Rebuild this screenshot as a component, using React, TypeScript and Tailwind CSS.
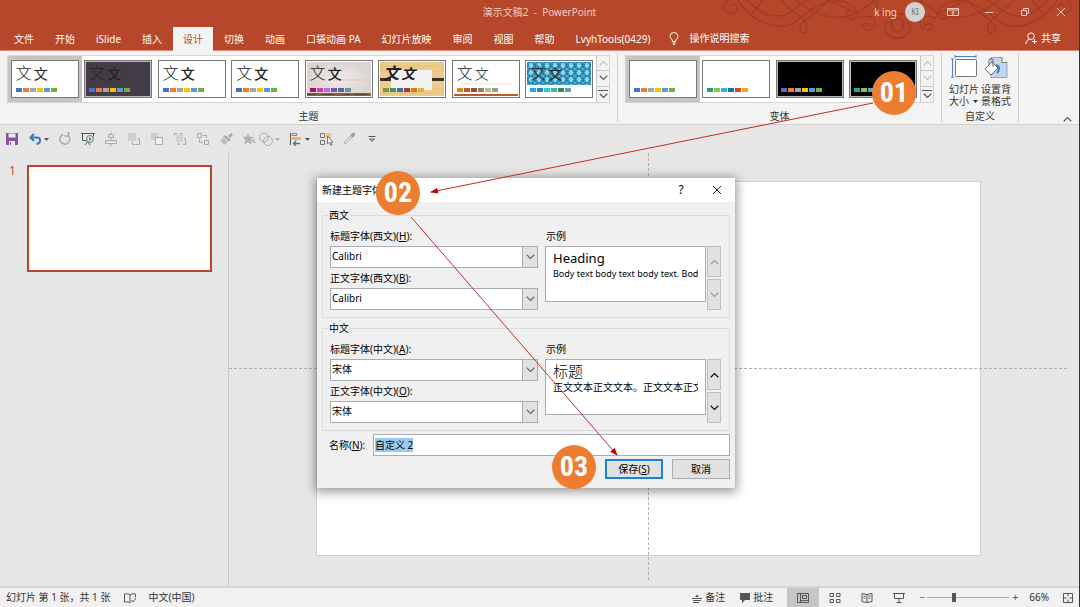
import { useState } from "react"
import type { ReactNode } from "react"
import clsx from "clsx"

const OFFICE = ["bg-[#4472c4]", "bg-[#ed7d31]", "bg-[#a5a5a5]", "bg-[#ffc000]", "bg-[#5b9bd5]", "bg-[#70ad47]"]

const TABS = ["文件", "开始", "iSlide", "插入", "设计", "切换", "动画", "口袋动画 PA", "幻灯片放映", "审阅", "视图", "帮助", "LvyhTools(0429)"]

type Art = "dark" | "wall" | "wood" | "retro" | "pattern"

const THEMES: { name: string; colors: string[]; art?: Art; first?: string; second?: string }[] = [
  { name: "Office", colors: OFFICE },
  { name: "深色", colors: OFFICE, art: "dark", second: "font-medium" },
  { name: "白色", colors: OFFICE, second: "font-medium" },
  { name: "简约", colors: OFFICE, second: "font-medium" },
  { name: "画廊", colors: ["bg-[#b31166]", "bg-[#e33d9b]", "bg-[#b86bf0]", "bg-[#7a55b0]", "bg-[#5a64a8]", "bg-[#6a92a4]"], art: "wall", second: "font-medium" },
  { name: "木纹", colors: ["bg-[#83992a]", "bg-[#3c9770]", "bg-[#44709d]", "bg-[#a23c33]", "bg-[#d97828]", "bg-[#deb340]"], art: "wood", first: "font-bold italic", second: "font-bold italic" },
  { name: "回顾", colors: ["bg-[#e48312]", "bg-[#bd582c]", "bg-[#865640]", "bg-[#9b8357]", "bg-[#c2bc80]", "bg-[#94a088]"], art: "retro", second: "font-light" },
  { name: "积分", colors: ["bg-[#1cade4]", "bg-[#2683c6]", "bg-[#27ced7]", "bg-[#42ba97]", "bg-[#3e8853]", "bg-[#62a39f]"], art: "pattern" },
]

const VARIANTS = [
  { name: "变体 1", colors: OFFICE, dark: false },
  { name: "变体 2", colors: ["bg-[#2c9c7c]", "bg-[#8cc63f]", "bg-[#31b6d4]", "bg-[#1f6fb0]", "bg-[#c0501f]", "bg-[#f0a01e]"], dark: false },
  { name: "变体 3", colors: OFFICE, dark: true },
  { name: "变体 4", colors: ["bg-[#2ba88c]", "bg-[#92be4b]", "bg-[#31b6d4]", "bg-[#1f6fb0]", "bg-[#c0501f]", "bg-[#f0a01e]"], dark: true },
]

function Chevron({ up = false, className = "" }: { up?: boolean; className?: string }) {
  return (
    <svg viewBox="0 0 12 8" className={clsx("h-1.5 w-[9px]", className)} fill="none" stroke="currentColor" strokeWidth="1.5">
      <path d={up ? "M1 7l5-5 5 5" : "M1 1l5 5 5-5"} />
    </svg>
  )
}

function Caret() {
  return (
    <svg viewBox="0 0 5 3" className="h-[3px] w-[5px] shrink-0" fill="currentColor">
      <path d="M0 0h5L2.500 3z" />
    </svg>
  )
}

function Ornament() {
  const half = (
    <>
      <path d="M20-2C12-3 5 1 5 7s8 9 12 4-2-9-6-5" />
      <path d="M18-1c9 14 22 25 40 27 16 2 22-8 32-15s22-13 36-9c12 4 16 15 8 17s-8-9-2-9" />
      <path d="M28-1c8 10 18 17 30 17 18 0 22-17 38-18 18 0 30 12 44 16" />
      <path d="M62-1c8 14 27 19 26 28 0 8-7 7-7 1 0-8 20-14 29-30" />
      <path d="M44-1c-2 8-9 9-12 16M76-1c10 10 28 20 48 18 18-2 22-12 36-19" />
      <path d="M152 27c-3-5-10-4-9 0s12 4 13-3-8-10-16-6" />
      <path d="M179 38c-9 0-14-6-13-12s10-4 7 1M179 32c-8 0-10-12 0-14M160-1c-6 12 2 18 19 14" />
    </>
  )
  return (
    <svg viewBox="0 0 360 50" className="pointer-events-none absolute top-0 right-0 h-[50px] w-[360px]" fill="none" stroke="#9d3d24" strokeWidth="1.3">
      <g>{half}</g>
      <g transform="translate(357 0) scale(-1 1)">{half}</g>
    </svg>
  )
}

function TitleBar() {
  return (
    <div className="relative grid h-6 grid-cols-[1fr_auto_1fr] items-center text-[#f6cfc3]">
      <span />
      <h1 className="whitespace-pre text-[10px]">演示文稿2  -  PowerPoint</h1>
      <div className="flex items-center justify-end">
        <span className="mr-2 text-[10px]">k ing</span>
        <span className="mr-2.5 flex size-5 items-center justify-center rounded-full bg-[#d2d2d2] text-[8px] text-[#777]">KI</span>
        <button aria-label="功能区显示选项" className="flex w-9 justify-center">
          <svg viewBox="0 0 12 10" className="h-2.5 w-3" fill="none" stroke="currentColor">
            <path d="M.5 1.500h11v7H.5zM.5 3h11M6 8V4.500M4.500 6L6 4.500 7.500 6" />
          </svg>
        </button>
        <button aria-label="最小化" className="flex w-9 justify-center">
          <span className="h-px w-2 bg-current" />
        </button>
        <button aria-label="还原" className="flex w-9 justify-center">
          <svg viewBox="0 0 10 10" className="size-2.5" fill="none" stroke="currentColor">
            <path d="M1.500 3.500h5v5h-5zM3.500 3.500v-2h5v5h-2" />
          </svg>
        </button>
        <button aria-label="关闭" className="flex w-9 justify-center">
          <svg viewBox="0 0 10 10" className="size-2.5" fill="none" stroke="currentColor">
            <path d="M1 1l8 8M9 1L1 9" />
          </svg>
        </button>
      </div>
    </div>
  )
}

function TabBar({ active, onSelect }: { active: string; onSelect: (tab: string) => void }) {
  return (
    <nav className="relative flex h-[27px] items-end gap-px border-b border-[#d98a77] pl-1 text-[10px] text-white">
      {TABS.map((tab) => (
        <button
          key={tab}
          onClick={() => onSelect(tab)}
          className={clsx("-mb-px h-6 px-2.5 whitespace-nowrap", tab === active && "bg-[#f3f3f3] text-[#b7472a]")}
        >
          {tab}
        </button>
      ))}
      <label className="ml-2 flex h-6 items-center gap-2.5">
        <svg viewBox="0 0 10 13" className="h-[13px] w-2.5" fill="none" stroke="currentColor">
          <path d="M3.500 9.500C3.500 7 1 6.500 1 4.500a4 4 0 018 0c0 2-2.500 2.500-2.500 5zM3.500 11h3M4 12.500h2" />
        </svg>
        <input placeholder="操作说明搜索" aria-label="操作说明搜索" className="w-20 bg-transparent outline-none placeholder:text-white" />
      </label>
      <button className="mr-[18px] ml-auto flex h-6 items-center gap-1">
        <svg viewBox="0 0 12 12" className="size-3" fill="none" stroke="currentColor">
          <path d="M6 7.500a3.300 3.300 0 100-6.600 3.300 3.300 0 000 6.600zM.8 12c.2-2.500 1.500-4.200 3.700-4.800M9.500 7v5M7 9.500h5" />
        </svg>
        共享
      </button>
    </nav>
  )
}

function Swatches({ colors }: { colors: string[] }) {
  return (
    <span className="flex gap-px">
      {colors.map((color, i) => (
        <span key={i} className={clsx("h-1 w-1.5", color)} />
      ))}
    </span>
  )
}

function ThemeArt({ art }: { art?: Art }) {
  return (
    <svg viewBox="0 0 64 34" preserveAspectRatio="none" className="absolute inset-0 size-full">
      {art === "dark" && <path d="M0 0h64v34H0z" fill="#433c47" />}
      {art === "wall" && (
        <>
          <radialGradient id="wall">
            <stop offset="0" stopColor="#f1ecec" />
            <stop offset="1" stopColor="#dcd4d3" />
          </radialGradient>
          <path d="M0 0h64v34H0z" fill="url(#wall)" />
          <path d="M26 18h32" stroke="#d9a9b4" strokeWidth=".6" />
          <path d="M0 31h64v3H0z" fill="#84653f" />
          <path d="M0 32.500h9m6 0h12m9 0h7m4 0h13" stroke="#5d4328" />
        </>
      )}
      {art === "wood" && (
        <>
          <path d="M0 0h64v34H0z" fill="#eccb8c" />
          <path d="M0 4h64M0 9h64M0 27h64M0 31h64" stroke="#e5c07c" />
          <path d="M0 17.500h64" stroke="#37312c" strokeWidth="3" />
          <path d="M11 8h41v20H11z" fill="#f2f2f0" />
        </>
      )}
      {art === "retro" && (
        <>
          <path d="M7 22h50" stroke="#ddd" strokeWidth=".7" />
          <path d="M0 32h64v2H0z" fill="#bd582c" />
        </>
      )}
      {art === "pattern" && (
        <>
          <pattern id="diamonds" width="8" height="7" patternUnits="userSpaceOnUse">
            <path d="M0 0h8v7H0z" fill="#1b86b4" />
            <path d="M4 .5l2.500 3-2.500 3-2.500-3z" fill="#b9e2ef" />
            <path d="M0 0l8 7M8 0L0 7" stroke="#70bcd6" strokeWidth=".8" />
          </pattern>
          <path d="M0 0h64v23H0z" fill="url(#diamonds)" />
        </>
      )}
    </svg>
  )
}

function GalleryItem({ name, selected, dark = false, children }: { name: string; selected: boolean; dark?: boolean; children: ReactNode }) {
  return (
    <button aria-label={name} className={clsx("flex items-center justify-center", selected && "bg-[#c5c5c5]")}>
      <span className={clsx("flex h-[38px] w-[68px] border border-[#777] p-px", dark ? "bg-[#bbb]" : "bg-white")}>
        <span className={clsx("relative flex grow flex-col justify-end overflow-hidden pb-1 pl-[3px]", dark && "bg-black")}>{children}</span>
      </span>
    </button>
  )
}

function GalleryScroll({ atTop = true, canScroll }: { atTop?: boolean; canScroll: boolean }) {
  return (
    <div className="grid w-[13px] grid-rows-3 divide-y divide-[#c6c6c6] border-l border-[#c6c6c6] bg-[#f3f3f3] text-[#555]">
      <button aria-label="上一行" className={clsx("flex items-center justify-center", atTop && "text-[#c0c0c0]")}>
        <Chevron up />
      </button>
      <button aria-label="下一行" className={clsx("flex items-center justify-center", !canScroll && "text-[#c0c0c0]")}>
        <Chevron />
      </button>
      <button aria-label="其他" className="flex flex-col items-center justify-center gap-0.5">
        <span className="h-px w-2.5 bg-current" />
        <Chevron />
      </button>
    </div>
  )
}

function RibbonGroup({ label, children }: { label: string; children: ReactNode }) {
  return (
    <section className="my-0.5 flex flex-col border-r border-[#cfcfcf] px-[7px] pt-0.5">
      {children}
      <h2 className="mt-auto text-center text-[10px] leading-3">{label}</h2>
    </section>
  )
}

function Ribbon() {
  return (
    <div className="flex h-[74px] border-b border-[#d0d0d0] bg-[#f3f3f3] text-[#333]">
      <RibbonGroup label="主题">
        <div className="flex h-12 border border-[#d5d5d5] bg-white">
          <div className="grid w-[588px] grid-cols-8">
            {THEMES.map((theme, i) => (
              <GalleryItem key={theme.name} name={theme.name} selected={i === 0} dark={theme.art === "dark"}>
                <ThemeArt art={theme.art} />
                <span className="relative mb-[7px] flex items-end gap-0.5 leading-4 text-[#222]">
                  <span className={clsx("text-base leading-4", theme.first ?? "font-light")}>文</span>
                  <span className={clsx("text-sm leading-[14px]", theme.second)}>文</span>
                </span>
                <span className="relative">
                  <Swatches colors={theme.colors} />
                </span>
              </GalleryItem>
            ))}
          </div>
          <GalleryScroll canScroll />
        </div>
      </RibbonGroup>
      <RibbonGroup label="变体">
        <div className="flex h-12 border border-[#d5d5d5] bg-white">
          <div className="grid w-[294px] grid-cols-4">
            {VARIANTS.map((variant, i) => (
              <GalleryItem key={variant.name} name={variant.name} selected={i === 0} dark={variant.dark}>
                <Swatches colors={variant.colors} />
              </GalleryItem>
            ))}
          </div>
          <GalleryScroll canScroll={false} />
        </div>
      </RibbonGroup>
      <RibbonGroup label="自定义">
        <div className="flex gap-0.5 text-[10px] leading-3">
          <button className="flex flex-col items-center gap-1">
            <svg viewBox="0 0 26 24" className="h-6 w-[26px]" fill="none">
              <path d="M4 1.500h21M4 0v3M25 0v3M1.500 4v18M0 4h3M0 22h3" stroke="#4a86c5" />
              <rect x="4.500" y="4.500" width="21" height="17" rx="1" fill="#fff" stroke="#777" />
            </svg>
            <span>
              幻灯片
              <span className="flex items-center gap-1">大小 <Caret /></span>
            </span>
          </button>
          <button className="flex flex-col items-center gap-1">
            <svg viewBox="0 0 26 24" className="h-6 w-[26px]" fill="none">
              <path d="M8 2.500h11l5 5v15H8z" fill="#c3d6ec" stroke="#8aa9cc" />
              <path d="M19 2.500v5h5" fill="#fff" stroke="#777" />
              <path d="M2 14l7-7 6 6-7 7z" fill="#fff" stroke="#666" />
              <path d="M6 10V5.500a2 2 0 014 0V12" stroke="#666" />
              <path d="M13 10c4 1 4 5 1 8" stroke="#3f7fc1" strokeWidth="2" />
            </svg>
            <span className="w-[30px]">设置背景格式</span>
          </button>
        </div>
      </RibbonGroup>
      <button aria-label="折叠功能区" className="mt-auto mr-[7px] mb-0.5 ml-auto text-[#555]">
        <Chevron up />
      </button>
    </div>
  )
}

function Tool({ label, menu = false, className = "text-[#a9a9a9]", children }: { label: string; menu?: boolean; className?: string; children: ReactNode }) {
  return (
    <button aria-label={label} className={clsx("flex items-center gap-0.5", className)}>
      <svg viewBox="0 0 14 14" className="size-3.5" fill="none" stroke="currentColor">
        {children}
      </svg>
      {menu && <Caret />}
    </button>
  )
}

function QuickAccess() {
  return (
    <div className="flex h-7 items-center gap-[3px] pl-[5px]">
      <div className="flex gap-[9px]">
        <Tool label="保存" className="text-[#8a4fa8]">
          <path d="M1.500 1.500h11v11h-11z" fill="#8a4fa8" />
          <path d="M3.500 1.500h7v4h-7zM4 9h6v4H4z" fill="#f3eef6" stroke="none" />
          <path d="M5.500 10v3" />
        </Tool>
        <Tool label="撤消" menu className="text-[#555]">
          <path d="M6 2L2.500 5.500 6 9M3 5.500h6c4 0 4.500 6-.5 6.500" stroke="#3f78b5" strokeWidth="2" />
        </Tool>
        <Tool label="恢复">
          <path d="M5 2.500a5 5 0 105 .8M10.500 0v4h-4" strokeWidth="1.500" />
        </Tool>
        <Tool label="从头开始" className="text-[#555]">
          <path d="M0 1.500h14M1.500 1.500v7h5M12.500 1.500v3M7 9l-3 4M7 10l2 3" />
          <circle cx="9" cy="7" r="3.500" fill="#e6e6e6" stroke="#5d8a76" />
          <path d="M8 5l3 2-3 2z" fill="#3f9b73" stroke="none" />
        </Tool>
        <Tool label="水平居中">
          <path d="M7 0v2M7 6v2M7 12v2M4.500 2.500h5v3h-5zM1.500 8.500h11v3h-11z" />
        </Tool>
        <Tool label="上移一层">
          <path d="M8.500 12.500h4v-6h-2M5.500 10v2.500h3" />
          <path d="M1 1h8v8H1z" fill="#d0cdd0" stroke="none" />
        </Tool>
        <Tool label="下移一层">
          <path d="M1 1h7v7H1z" fill="#d0cdd0" stroke="none" />
          <path d="M5.500 5.500h7v7h-7z" fill="#f3f0f3" />
        </Tool>
        <Tool label="组合">
          <path d="M1.500 4V1.500H4M6.500 1.500h2V4M7 12.500H5.500V11M11 6.500h1.500v6H10" />
          <path d="M3 3h7v7H3z" fill="#d4d1d4" stroke="none" />
        </Tool>
        <Tool label="取消组合">
          <path d="M1.500 1.500h4v4h-4zM8.500 8.500h4v4h-4zM7 3.500h3.500V6M3.500 7v3.500H7" />
        </Tool>
        <Tool label="格式刷">
          <path d="M9 4l3-3 2 2-3 3z" fill="currentColor" stroke="none" />
          <path d="M6 3l6 5-2 1.500-6-5z" fill="currentColor" stroke="none" />
          <path d="M4 5.500l5 4L5.500 13 1 8.500c1.500 0 2.500-1 3-3z" fill="#bfbcbf" stroke="none" />
        </Tool>
        <Tool label="动画刷">
          <path d="M6 1l1.500 3.500L12 5 8.500 8l1 5L6 10l-4 2.500L3.500 8 .5 5l4-.5z" fill="#b3b0b3" stroke="none" />
          <path d="M9 8l5 3M10 11l3-4" />
        </Tool>
      </div>
      <div className="flex gap-[9px]">
        <Tool label="合并形状" menu>
          <circle cx="5" cy="5.500" r="4.500" />
          <circle cx="9" cy="9" r="4.500" />
        </Tool>
        <Tool label="左对齐" menu className="text-[#555]">
          <path d="M1.500 1v12" />
          <path d="M3 1.500h5v2H3z" stroke="#888" />
          <path d="M3 5h9v3H3z" fill="#edb45c" stroke="none" />
          <path d="M11 11.500H5M7 9l-2.500 2.500L7 14" stroke="#3f78b5" strokeWidth="1.300" />
        </Tool>
        <Tool label="选择" className="text-[#777]">
          <path d="M1.500 1.500h4v4h-4zM1.500 8.500h4v4h-4z" />
          <path d="M7 1h5v5H7z" fill="#edc178" stroke="none" />
          <path d="M8.500 4v8l2-2 1.500 3.500L13 13l-1-3h2z" fill="#fff" />
        </Tool>
        <Tool label="取色器">
          <path d="M2 12l.5-2L8 4.500 9.500 6 4 11.500z" />
          <path d="M8 3l3 3 2.500-3.500L11.500.5z" fill="#999" stroke="none" />
        </Tool>
        <Tool label="自定义快速访问工具栏" className="text-[#555]">
          <path d="M3.500 4.500h7M4.500 7L7 9.500 9.500 7z" />
        </Tool>
      </div>
    </div>
  )
}

function Workspace() {
  return (
    <main className="flex min-h-0 grow">
      <aside className="flex w-[229px] shrink-0 items-start gap-3 border-r border-[#c9c9c9] pt-3 pr-4 pl-[9px]">
        <span className="w-1.5 text-xs leading-3 text-[#c8502f]">1</span>
        <button aria-label="幻灯片 1" className="h-[107px] grow border-2 border-[#b7472a] bg-white" />
      </aside>
      <div className="relative mr-3 flex grow items-center justify-center pb-0.5">
        <div className="aspect-video w-[665px] border border-[#cfcfcf] bg-white" />
        {/* drawing guides cross at the slide centre */}
        <div className="absolute inset-x-0 top-1/2 -mt-0.5 border-t border-dashed border-[#b0b0b0]" />
        <div className="absolute top-0 bottom-1.5 left-1/2 border-l border-dashed border-[#b0b0b0]" />
      </div>
    </main>
  )
}

function StatusIcon({ label, active = false, children }: { label: string; active?: boolean; children: ReactNode }) {
  return (
    <button aria-label={label} className={clsx("flex h-full w-8 items-center justify-center", active && "bg-[#c6c6c6]")}>
      <svg viewBox="0 0 12 12" className="size-3" fill="none" stroke="#555">
        {children}
      </svg>
    </button>
  )
}

function StatusBar() {
  return (
    <footer className="flex h-[21px] shrink-0 items-center border-t-2 border-[#d6d6d6] bg-[#f1f1f1] px-1.5 text-[10px] text-[#333]">
      <span>幻灯片 第 1 张，共 1 张</span>
      <svg viewBox="0 0 12 12" className="mr-3 ml-3.5 size-3" fill="none" stroke="#555">
        <path d="M6 3C5 2 3 1.500.5 2v8c2.500-.5 4.500 0 5.500 1V3c1-1 3-1.500 5.500-1v3M7.500 8l1.500 2 3-4" />
      </svg>
      <span>中文(中国)</span>
      <div className="ml-auto flex h-full items-center">
        <button className="mr-3.5 flex items-center gap-[3px]">
          <svg viewBox="0 0 10 10" className="size-2.5" fill="#555" stroke="#555">
            <path d="M3 4l2-2.500L7 4z" stroke="none" />
            <path d="M0 5.500h10M1 7.500h8M1 9.500h6" />
          </svg>
          备注
        </button>
        <button className="mr-3.5 flex items-center gap-0.5">
          <svg viewBox="0 0 12 10" className="h-2.5 w-3" fill="#555">
            <path d="M1 0h10v7H6l-3 3V7H1z" />
          </svg>
          批注
        </button>
        <StatusIcon label="普通视图" active>
          <path d="M.5 1.500h11v9H.5zM3.500 1.500v9M5.500 3.500h4v3h-4zM4 8.500h7" />
        </StatusIcon>
        <StatusIcon label="幻灯片浏览">
          <path d="M1 1.500h3.500v3H1zM7.500 1.500H11v3H7.500zM1 7.500h3.500v3H1zM7.500 7.500H11v3H7.500z" />
        </StatusIcon>
        <StatusIcon label="阅读视图">
          <path d="M6 2.500L1 1.500v8l5 1 5-1v-8zM6 2v8.500M2.500 4l2 .3M2.500 6l2 .3M7.500 4.300l2-.3M7.500 6.300l2-.3" />
        </StatusIcon>
        <StatusIcon label="幻灯片放映">
          <path d="M0 1.500h12M1.500 1.500v5h9v-5M6 6.500v4M3.500 10.500h5" />
        </StatusIcon>
        <button aria-label="缩小" className="ml-0.5 w-2.5 text-[#555]">−</button>
        <input
          type="range"
          aria-label="缩放"
          min={10}
          max={200}
          defaultValue={70}
          className="h-px w-[82px] appearance-none bg-[#aaa] [&::-webkit-slider-thumb]:h-[9px] [&::-webkit-slider-thumb]:w-1 [&::-webkit-slider-thumb]:appearance-none [&::-webkit-slider-thumb]:bg-[#555]"
        />
        <button aria-label="放大" className="w-3 text-[#555]">+</button>
        <button className="mr-3.5 ml-2">66%</button>
        <button aria-label="按窗口大小调整">
          <svg viewBox="0 0 10 10" className="size-2.5" fill="none" stroke="#555">
            <path d="M.5.5h9v9h-9zM5 0v3.500M5 6.500V10M0 5h3.500M6.500 5H10" />
          </svg>
        </button>
      </div>
    </footer>
  )
}

function FontSelect({ id, label, hotkey, value }: { id: string; label: string; hotkey: string; value: string }) {
  return (
    <>
      <label htmlFor={id} className="leading-[14px]">
        {label}(<u>{hotkey}</u>):
      </label>
      <div className="relative h-[22px]">
        <select id={id} defaultValue={value} className="size-full appearance-none border border-[#abadb3] bg-white px-px pb-0.5 outline-none">
          <option>{value}</option>
        </select>
        <span className="pointer-events-none absolute inset-y-0 right-0 flex w-4 items-center justify-center border border-[#adadad] bg-[#e1e1e1] text-[#666]">
          <Chevron />
        </span>
      </div>
    </>
  )
}

function FontGroup({ legend, children, preview, canScroll }: { legend: string; children: ReactNode; preview: ReactNode; canScroll: boolean }) {
  const scroll = clsx("flex grow items-center justify-center border border-[#bfbfbf] bg-[#e1e1e1]", canScroll ? "text-black" : "text-[#999]")
  return (
    <fieldset className="min-w-0 border border-[#dcdcdc] pr-2 pb-[7px] pl-[7px]">
      <legend className="-ml-0.5 px-px leading-[14px]">{legend}</legend>
      <div className="flex gap-[7px] pt-[7px]">
        <div className="flex w-[208px] shrink-0 flex-col gap-[3px]">{children}</div>
        <div className="flex min-w-0 grow flex-col gap-[3px]">
          <span className="pl-px leading-[14px]">示例</span>
          <div className="flex grow gap-px">
            <div className="mb-2 min-w-0 grow border border-[#abadb3] bg-white px-[7px] pt-px">
              <div className="overflow-hidden whitespace-nowrap">{preview}</div>
            </div>
            <div className="flex w-3.5 shrink-0 flex-col gap-0.5">
              <button type="button" aria-label="向上滚动" className={scroll}>
                <Chevron up />
              </button>
              <button type="button" aria-label="向下滚动" className={scroll}>
                <Chevron />
              </button>
            </div>
          </div>
        </div>
      </div>
    </fieldset>
  )
}

function FontDialog() {
  const [name, setName] = useState("自定义 2")
  return (
    <form
      role="dialog"
      aria-label="新建主题字体"
      onSubmit={(e) => e.preventDefault()}
      className="absolute top-[178px] left-[317px] w-[418px] bg-[#f0f0f0] text-[10px] text-black shadow-[0_2px_10px_2px_rgba(0,0,0,0.4)]"
    >
      <header className="flex h-6 items-center bg-white pl-[5px]">
        <h2 className="grow">新建主题字体</h2>
        <button type="button" aria-label="帮助" className="w-9 text-xs">?</button>
        <button type="button" aria-label="关闭" className="flex w-9 justify-center">
          <svg viewBox="0 0 10 10" className="size-2.5" fill="none" stroke="#222">
            <path d="M1 1l8 8M9 1L1 9" />
          </svg>
        </button>
      </header>
      <div className="flex flex-col gap-[3px] px-[5px] pt-1.5 pb-[9px]">
        <FontGroup
          legend="西文"
          canScroll={false}
          preview={
            <>
              <p className="text-[13px] leading-5">Heading</p>
              <p className="text-[9px] leading-3">Body text body text body text. Body text body text.</p>
            </>
          }
        >
          <FontSelect id="latin-heading" label="标题字体(西文)" hotkey="H" value="Calibri" />
          <FontSelect id="latin-body" label="正文字体(西文)" hotkey="B" value="Calibri" />
        </FontGroup>
        <FontGroup
          legend="中文"
          canScroll
          preview={
            <>
              <p className="text-[15px] leading-5 font-light">标题</p>
              <p className="leading-3">正文文本正文文本。正文文本正文文本。</p>
            </>
          }
        >
          <FontSelect id="cjk-heading" label="标题字体(中文)" hotkey="A" value="宋体" />
          <FontSelect id="cjk-body" label="正文字体(中文)" hotkey="O" value="宋体" />
        </FontGroup>
        <div className="flex items-center pl-[7px]">
          <label htmlFor="font-name" className="w-11">
            名称(<u>N</u>):
          </label>
          <span className="flex h-[22px] grow items-center border border-[#abadb3] bg-white pl-px">
            <input id="font-name" value={name} onChange={(e) => setName(e.target.value)} className="field-sizing-content bg-[#99c9ef] leading-[14px] outline-none" />
          </span>
        </div>
        <div className="flex justify-end gap-[9px]">
          <button type="submit" className="h-5 w-[58px] border-2 border-[#1c82d9] bg-[#e1e1e1] leading-4">
            保存(<u>S</u>)
          </button>
          <button type="button" className="h-5 w-[58px] border border-[#adadad] bg-[#e1e1e1]">取消</button>
        </div>
      </div>
    </form>
  )
}

function Badge({ className, children }: { className: string; children: ReactNode }) {
  return (
    <span className={clsx("absolute flex size-11 items-center justify-center rounded-full bg-[#ed7d31] font-['Liberation_Sans_Narrow','Roboto_Condensed',Roboto,sans-serif] text-[28px] font-bold text-white", className)}>
      {children}
    </span>
  )
}

function Annotations() {
  return (
    <div className="pointer-events-none absolute inset-0">
      <svg className="absolute inset-0 size-full" stroke="#c92a2a" fill="none">
        <marker id="tip" viewBox="0 0 8 8" refX="7" refY="4" markerWidth="8" markerHeight="8" orient="auto">
          <path d="M0 1l8 3-8 3z" fill="#c00000" stroke="none" />
        </marker>
        <path d="M873 103L431 192" markerEnd="url(#tip)" />
        <path d="M411 217L617 455" markerEnd="url(#tip)" />
      </svg>
      <Badge className="top-[71px] left-[872px]">01</Badge>
      <Badge className="top-[171px] left-[376px]">02</Badge>
      <Badge className="top-[445px] left-[552px]">03</Badge>
    </div>
  )
}

export default function App() {
  const [tab, setTab] = useState("设计")

  return (
    <div className="relative flex h-screen flex-col overflow-hidden border-r border-[#333] bg-[#e6e6e6] font-['Noto_Sans','Noto_Sans_CJK_SC',sans-serif]">
      <header className="relative shrink-0 bg-[#b7472a]">
        <Ornament />
        <TitleBar />
        <TabBar active={tab} onSelect={setTab} />
      </header>
      <Ribbon />
      <QuickAccess />
      <Workspace />
      <StatusBar />
      <FontDialog />
      <Annotations />
    </div>
  )
}
